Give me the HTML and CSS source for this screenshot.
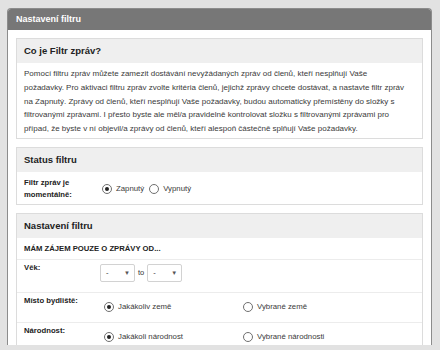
FILE: index.html
```html
<!DOCTYPE html>
<html lang="cs">
<head>
<meta charset="utf-8">
<title>Nastavení filtru</title>
<link rel="stylesheet" href="styles.css">
</head>
<body>
<div class="panel">
  <div class="panel-title">Nastavení filtru</div>
  <div class="panel-body">
    <section class="box">
      <h2 class="box-title">Co je Filtr zpráv?</h2>
      <p class="box-text">Pomocí filtru zpráv můžete zamezit dostávání nevyžádaných zpráv od členů, kteří nesplňují Vaše<br>požadavky. Pro aktivaci filtru zpráv zvolte kritéria členů, jejichž zprávy chcete dostávat, a nastavte filtr zpráv<br>na Zapnutý. Zprávy od členů, kteří nesplňují Vaše požadavky, budou automaticky přemístěny do složky s<br>filtrovanými zprávami. I přesto byste ale měl/a pravidelně kontrolovat složku s filtrovanými zprávami pro<br>případ, že byste v ní objevil/a zprávy od členů, kteří alespoň částečně splňují Vaše požadavky.</p>
    </section>
    <section class="box">
      <h2 class="box-title">Status filtru</h2>
      <div class="status-row">
        <div class="label">Filtr zpráv je momentálně:</div>
        <div class="status-options">
          <label class="opt"><span class="radio checked"></span>Zapnutý</label>
          <label class="opt"><span class="radio"></span>Vypnutý</label>
        </div>
      </div>
    </section>
    <section class="box">
      <h2 class="box-title">Nastavení filtru</h2>
      <div class="intro-row">MÁM ZÁJEM POUZE O ZPRÁVY OD...</div>
      <div class="form-row age-row">
        <div class="label">Věk:</div>
        <div class="age-fields">
          <div class="select"><span>-</span><span class="caret">▼</span></div>
          <span class="to">to</span>
          <div class="select"><span>-</span><span class="caret">▼</span></div>
        </div>
      </div>
      <div class="form-row radio-row">
        <div class="label">Místo bydliště:</div>
        <div class="choices">
          <label class="opt"><span class="radio checked"></span>Jakákoliv země</label>
          <label class="opt"><span class="radio"></span>Vybrané země</label>
        </div>
      </div>
      <div class="form-row radio-row last">
        <div class="label">Národnost:</div>
        <div class="choices">
          <label class="opt"><span class="radio checked"></span>Jakákoli národnost</label>
          <label class="opt"><span class="radio"></span>Vybrané národnosti</label>
        </div>
      </div>
    </section>
  </div>
</div>
</body>
</html>
```
FILE: styles.css
```css
body {
  margin: 0;
  background: #e2e2e2;
  font-family: "Liberation Sans", Arial, sans-serif;
  color: #333;
}

.panel {
  margin: 8px 0 0 7px;
  width: 425px;
  height: 337px;
  box-sizing: border-box;
  border: 1px solid #8c8c8c;
  border-bottom: none;
  border-radius: 4px 4px 0 0;
  background: #fff;
  overflow: hidden;
}

.panel-title {
  height: 21px;
  line-height: 21px;
  background: #777;
  border-top: 1px dotted #999;
  margin-top: -1px;
  color: #fff;
  font-weight: bold;
  font-size: 9px;
  padding-left: 8px;
}

.panel-body {
  padding: 8px 8px 0 8px;
}

.box {
  border: 1px solid #dcdcdc;
  margin-bottom: 8px;
}

.box-title {
  margin: 0;
  height: 24px;
  line-height: 24px;
  background: #efefef;
  color: #222;
  font-size: 9.5px;
  font-weight: bold;
  padding-left: 7px;
}

.box-text {
  margin: 0;
  padding: 4px 7px 2px 7px;
  font-size: 8px;
  line-height: 13.8px;
  white-space: nowrap;
  color: #3a3a3a;
}

.label {
  font-size: 7.7px;
  font-weight: bold;
  line-height: 12px;
  color: #222;
}

.status-row {
  display: grid;
  grid-template-columns: 78px auto;
  padding: 5px 7px 3px 7px;
  align-items: center;
}

.status-options {
  display: flex;
  gap: 5px;
}

.opt {
  display: flex;
  align-items: center;
  font-size: 7.8px;
  color: #3a3a3a;
}

.radio {
  width: 8px;
  height: 8px;
  border: 1px solid #6f6f6f;
  border-radius: 50%;
  margin-right: 4px;
  background: #fff;
  position: relative;
  flex: none;
}

.radio.checked::after {
  content: "";
  position: absolute;
  left: 2px;
  top: 2px;
  width: 4px;
  height: 4px;
  border-radius: 50%;
  background: #222;
}

.intro-row {
  height: 21px;
  line-height: 21px;
  padding-left: 7px;
  font-size: 7.7px;
  font-weight: bold;
  color: #222;
  border-bottom: 1px solid #ececec;
}

.form-row {
  display: grid;
  grid-template-columns: 76px auto;
  padding: 0 7px;
  border-bottom: 1px solid #ececec;
}

.form-row.last {
  border-bottom: none;
}

.age-row {
  height: 32px;
}

.age-row .label {
  padding-top: 2px;
}

.age-fields {
  display: flex;
  align-items: center;
  align-self: start;
  margin-top: 4px;
}

.select {
  width: 35px;
  height: 18px;
  box-sizing: border-box;
  border: 1px solid #d2d2d2;
  border-radius: 2px;
  background: #fff;
  display: flex;
  align-items: center;
  justify-content: space-between;
  padding: 0 4px 0 5px;
  font-size: 7.5px;
}

.caret {
  font-size: 6px;
  color: #555;
}

.to {
  font-size: 7.5px;
  margin: 0 3px;
}

.radio-row {
  height: 29px;
}

.radio-row .label {
  padding-top: 2px;
}

.choices {
  display: grid;
  grid-template-columns: 139px auto;
  padding-top: 9px;
  padding-left: 4px;
  align-self: start;
}
```
